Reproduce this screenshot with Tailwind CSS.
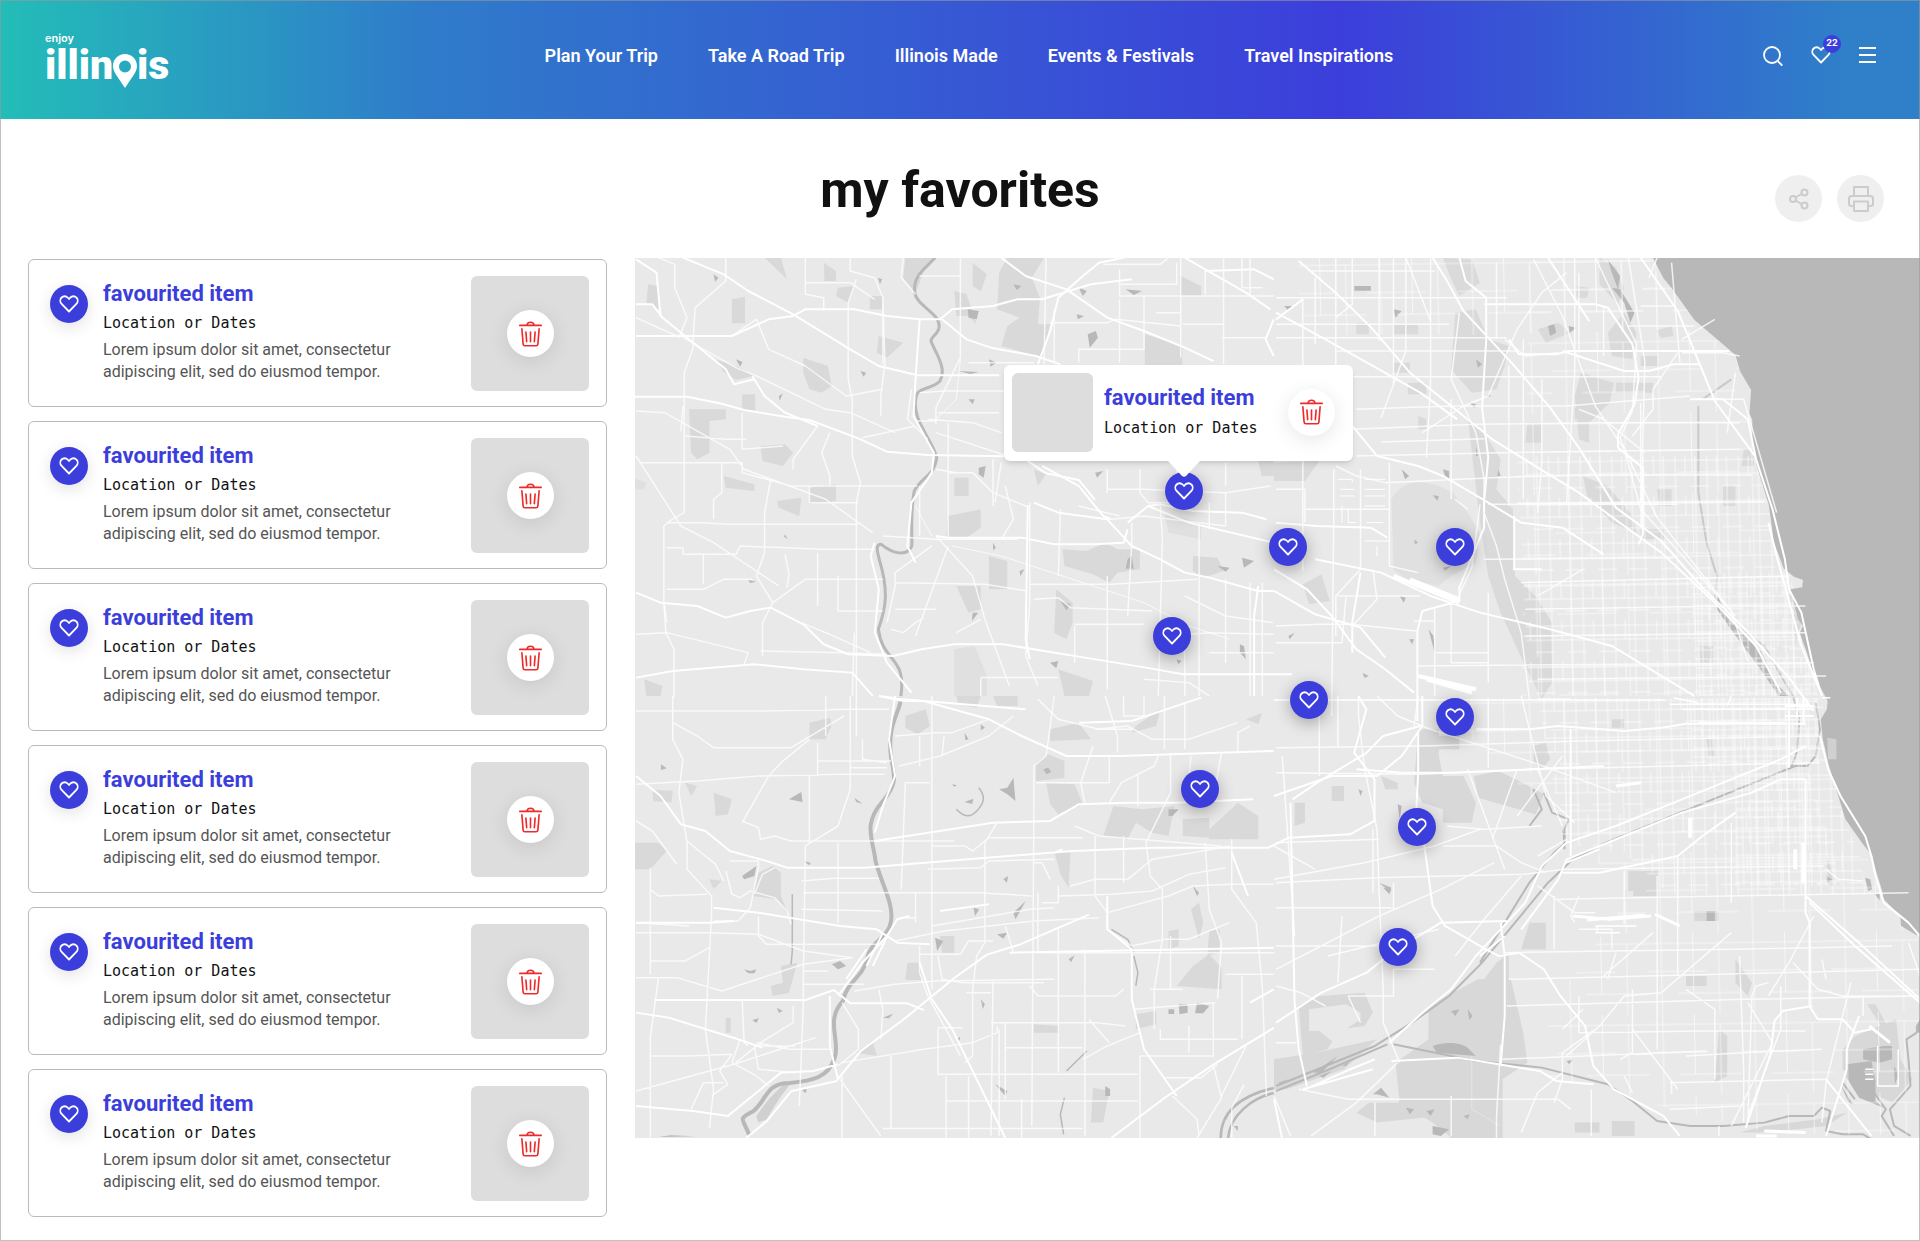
<!DOCTYPE html>
<html lang="en">
<head>
    <meta charset="UTF-8">
    <meta name="viewport" content="width=device-width, initial-scale=1.0">
    <title>My Favorites | Enjoy Illinois</title>
    <script src="https://cdn.jsdelivr.net/npm/@tailwindcss/browser@4"></script>
</head>
<body class="bg-white font-['Roboto','Liberation_Sans',sans-serif] text-[#111111]">

    <!-- Shared icons -->
    <svg class="hidden" xmlns="http://www.w3.org/2000/svg">
        <symbol id="icon-heart" viewBox="0 0 20 18">
            <path d="M10 16.5 2.6 8.9C.9 7.100.9 4.200 2.600 2.500c1.700-1.700 4.400-1.700 6 0L10 4l1.400-1.500c1.700-1.700 4.400-1.700 6 0 1.700 1.700 1.700 4.600 0 6.400z" fill="none" stroke="currentColor" stroke-width="1.800" stroke-linejoin="round"/>
        </symbol>
        <symbol id="icon-trash" viewBox="0 0 24 27">
            <g fill="none" stroke="currentColor" stroke-width="1.700" stroke-linecap="round" stroke-linejoin="round">
                <path d="M1 4.500h22" stroke-width="2"/>
                <path d="M8.500 4.200C8.500 2.200 9.700 1.200 12 1.200s3.500 1 3.500 3"/>
                <path d="M3 8l1.300 16c.1 1.200.8 1.800 1.900 1.800h11.600c1.100 0 1.800-.6 1.900-1.800L21 8"/>
                <path d="M7.200 11.500l.8 10M12 11.500v10M16.800 11.500l-.8 10"/>
            </g>
        </symbol>
    </svg>

    <div class="relative min-h-screen">
        <header class="bg-linear-[90deg,#23bdb8_0%,#2f7cca_22%,#3c3edb_70%,#2f7fc9_96%] text-white">
            <div class="flex h-[119px] items-start justify-between pr-11 pl-[45px]">
                <a href="#" aria-label="Enjoy Illinois" class="mt-7">
                    <svg class="h-[62px] w-[130px]" viewBox="0 0 130 62" fill="currentColor">
                        <text x="0" y="14" class="font-['Inter','Liberation_Sans',sans-serif] text-[11px] font-semibold">enjoy</text>
                        <text x="0" y="51" class="font-['Roboto','Liberation_Sans',sans-serif] text-[41px] font-black">illin</text>
                        <path fill-rule="evenodd" d="M80 26c-6.800 0-12 5.200-12 12 0 6 5 11 12 22 7-11 12-16 12-22 0-6.800-5.200-12-12-12zm0 6.500a6 6 0 1 1 0 12 6 6 0 0 1 0-12z"/>
                        <text x="92" y="51" class="font-['Roboto','Liberation_Sans',sans-serif] text-[41px] font-black">is</text>
                    </svg>
                </a>

                <nav class="mt-11 flex gap-[50px] text-lg leading-6 font-semibold whitespace-nowrap">
                    <a href="#">Plan Your Trip</a>
                    <a href="#">Take A Road Trip</a>
                    <a href="#">Illinois Made</a>
                    <a href="#">Events &amp; Festivals</a>
                    <a href="#">Travel Inspirations</a>
                </nav>

                <div class="mt-11 flex items-center gap-7">
                    <button type="button" aria-label="Search">
                        <svg class="h-[22px] w-5" viewBox="1 0 20 22" fill="none" stroke="currentColor" stroke-width="1.800" stroke-linecap="round"><circle cx="10" cy="11" r="8"/><path d="M16 17.300l3.700 3.700"/></svg>
                    </button>
                    <button type="button" aria-label="Favorites" class="relative">
                        <svg class="h-[18px] w-5"><use href="#icon-heart"/></svg>
                        <span class="absolute -top-[11px] left-3 size-[18px] rounded-full bg-[#3c3edb] text-center font-['Inter','Liberation_Sans',sans-serif] text-[9px] leading-4 font-bold">22</span>
                    </button>
                    <button type="button" aria-label="Menu">
                        <svg class="h-[18px] w-[17px]" viewBox="0 0 17 18" fill="none" stroke="currentColor" stroke-width="1.800"><path d="M0 2h17M0 9h17M0 16h17"/></svg>
                    </button>
                </div>
            </div>
        </header>

        <main>
            <div class="grid h-[139px] grid-cols-[1fr_auto_1fr] items-start">
                <h1 class="col-start-2 mt-[37px] text-[50px] leading-[68px] font-bold">my favorites</h1>
                <div class="mt-14 mr-9 flex gap-[15px] justify-self-end text-[#cccccc]">
                    <button type="button" aria-label="Share" class="flex size-[47px] items-center justify-center rounded-full bg-[#efefef]">
                        <svg class="size-[22px]" viewBox="0 0 22 22" fill="none" stroke="currentColor" stroke-width="2"><circle cx="5" cy="11" r="3"/><circle cx="16.500" cy="4.500" r="3"/><circle cx="16.500" cy="17.500" r="3"/><path d="M7.500 9.500l6-3.500M7.500 12.500l6 3.500"/></svg>
                    </button>
                    <button type="button" aria-label="Print" class="flex size-[47px] items-center justify-center rounded-full bg-[#efefef]">
                        <svg class="size-[26px]" viewBox="0 0 26 26" fill="none" stroke="currentColor" stroke-width="2" stroke-linejoin="round"><path d="M6 10V1h14v9"/><path d="M6 20H3.500C2 20 1 19 1 17.500v-5C1 11 2 10 3.500 10h19c1.500 0 2.500 1 2.500 2.500v5c0 1.500-1 2.500-2.500 2.500H20"/><path d="M6 15.500h14V25H6z"/></svg>
                    </button>
                </div>
            </div>

            <div class="grid grid-cols-[635px_1fr] items-start">
                <ul id="favorites" class="flex flex-col gap-[14px] px-7 pt-px pb-6"></ul>

                <section id="map" aria-label="Map of favorites" class="relative aspect-[1285/880]">
                    <svg class="absolute inset-0 size-full bg-[#e9e9e9] [&_path]:[vector-effect:non-scaling-stroke]" viewBox="0 0 1285 880" preserveAspectRatio="xMidYMid slice" fill="none" stroke-linejoin="round">
                        <defs>
                            <pattern id="blocks" width="32" height="41" patternUnits="userSpaceOnUse" patternTransform="rotate(-1) scale(2.4 3)">
                                <path d="M0 5h32M0 19h32M0 31h20M5 0v41M17 0v41M27 0v19" stroke="#ffffff" stroke-opacity=".7"/>
                            </pattern>
                            <pattern id="blocks-dense" width="23" height="27" patternUnits="userSpaceOnUse" patternTransform="rotate(-1) scale(2.400 3)">
                                <path d="M0 4h23M0 13h23M0 20h12M3 0v27M11 0v27M18 4v16" stroke="#ffffff" stroke-opacity=".7"/>
                            </pattern>
                            <pattern id="blocks-wide" width="93" height="81" patternUnits="userSpaceOnUse" patternTransform="rotate(-1) scale(2.400 3)">
                                <path d="M0 10h93M0 38h60M30 60h63M14 0v81M46 0v60M72 10v71" stroke="#ffffff" stroke-opacity=".6"/>
                            </pattern>
                        </defs>

                        <!-- North-west -->
                        <g transform="translate(-1 -2) scale(.408 .3333)">
                            <g fill="#d9d9d9">
                                <path d="M895 50l20-45h90l-30 60 20 60-5 80 30 0-20 100-100-35 15-60 30-25-55-25zM1252 235l92 35v60h-92zM665 5h75l-30 40-20 70-30-50zM415 305l60 25 10 60-25 20-30-10-15-50zM200 310l60 25 35 25-45 12-30-25zM135 460h90v30l-40 5v95l-30 20-15-20zM310 570l60-5 20 25-25 40-50-15zM430 695l65-10v50l-65 8zM220 660l75 25v20l-70-10zM870 900l45 15v85h-45zM1050 880l60 5 45-25 30 20h55v60l-55 10-20 30-40-25-70-25zM790 990h60v70l-30 10zM1035 1000l40 40v60l-15 50-30-20zM1040 1240l85 35-10 45h-60zM770 780l80-20v55l-40 35-45-10zM1370 900l60 5 15 40-50 20-25-20zM1520 560h48v100h-30zM240 130l32-8v80h-32zM35 85l25 5v70l-30-20zM265 415h32v50h-32zM465 20l30 25v30h-28zM320 5h40l15 65zM500 95l40-5-15 50-30-20zM578 120h30v40h-30zM830 20l35 35-15 50-20-15zM785 105l30 10 25 90-20-25h-30zM600 240l60 20-40 45-25-15zM785 665h35v55h-35zM980 640l30 15-20 35zM350 735l60-10-5 55-50-25zM1340 60l50 30v30h-50zM25 1270l45 20-5 30h-35z"/>
                                <path d="M785 1180l50-10 30 90 0 60h-80zM0 665l30 15-5 20H0zM1300 770l90 30v50l-80-20z" fill="#e0e0e0"/>
                            </g>
                            <g fill="#b8b8b8">
                                <path d="M818 160l27 5-5 25-20-5zM1112 235l20-10 5 20-20 30zM1090 95l20 10-10 15zM845 635l17-5-5 35-12-10zM930 85l20 5-12 12zM1205 100l40 5-20 12zM195 55l12 10-8 12zM598 65l10 5-5 15zM250 310l16 8-6 14zM870 310l18 10-14 12zM820 430h15l-5 15zM1130 650l20-5-15 20zM1210 910l10-12 5 40-20 0zM1045 1035l25 10-10 18zM1020 1220l20-5-5 22zM1330 1210l12 5-8 10zM1085 175l18 5-15 10zM1430 930l30 5-10 12zM1490 905l30 10-25 20zM555 345l14 5-6 12zM355 420l10-8-8 22zM370 835l7 15-9-8zM880 860l7 15-7 8zM945 945l12-5-10 20zM830 1070l14 0-16 25zM280 972l20 5-15 4zM1485 1165l10 5 5 40-15-20zM795 345l50 3-20 6z"/>
                            </g>
                            <path d="M738 5c-20 30-55 50-50 105 5 40 60 60 60 100 0 25-20 30-20 45 10 35 40 80 22 120-20 25-55 20-58 45-15 70 40 130 50 185-5 55-40 60-55 100-10 60-5 120-6 165-15 40-55 15-75-5-15 0-10 20-5 45 25 100 15 150-2 210 10 100 70 80 55 200" stroke="#b8b8b8" stroke-width="3"/>
                            <g stroke="#ffffff" stroke-opacity=".75" stroke-width="1.500">
                                <path d="M225 5v70l-75 80-5 90 0 30-22 75V770l-30 20-20 20v230l5 90 20 50v145M60 5l40 20v70l30 90-20 60M120 245l130 90 50 25 170 100 60 10 110 60M5 185l100 55M240 240h0l60-50 30 90 90 50 100 90 90-20M420 5v75h110l60 50M420 80v35l45 10v40M530 5v40l60 20 20 60v200M660 5l-5 60 35 50M800 5v300l-60 150 0 50M700 60h100M545 70l-20 70v230l10 60v170l20 80-10 60v700M610 120l5 200-10 100v60"/>
                                <path d="M5 465l70 5 160 110 35 60 200 90 115 100M125 540l100 10h50M15 620h250v30l120 40h310M120 450l-5 75M265 470v110l100-10M450 510l-60 100 0 30M480 530l-20 60 20 70v30M215 620v90l-20 20v60M335 670l-15 100v120l-20 70 40 80-25 60v100M430 690v50h120M700 690v150M5 600l110 210 80 50 160 130M80 800h90l60 5h320M80 875h40v20h130l10-25 200 10h130M170 895v90M80 1000h90l50-30h70M370 895l10 60-5 40M340 1040l80-70h190M450 890v160M500 960v105h110M610 840l130 10h200M640 990l0-40 90-80M640 990l-20 110M640 980l220 5 105 20"/>
                                <path d="M5 1135l75-5 200 60-10 35M80 1100l-5-55M310 1185l200 5 110 5M410 1100l60 30 110 60M540 1130l-5 190M740 1060h-100M630 1120l30 10 30-30 20-15M690 1140l80-270M740 840l90 120 30 130 60 200M770 500v340M790 520v1M740 530l200 80M745 470h150M770 650l60 0 50 60 80 40 10 0M680 400l-10 90 50 60M720 490l110 10 70 30M690 495h50M560 545l130-35M740 640l50 10M700 410l60-5h160M820 320h160M880 610v140M900 620l-15 120M850 1090l-60 40M850 1265h190M850 1265v55M910 690l20 100-30 60"/>
                                <path d="M1010 5l-5 320M1030 160v160M1150 25h140l20-20M1190 40v80h378M1190 85h140V20M1190 130v190M1090 280h160v-160M1090 280v40M1340 5v300M1445 5v320M1490 5v90h50M1020 200h140l20-10 160 20v-40h-60M1345 205h100M1400 45v70M1510 5v110M1440 245h110M970 740v300l-10 160 30 90M1045 760l-5 200M970 985h200l210-15M1160 700h90l200 10 110-20M1160 640v70M1240 640v70l20 30h90M1170 790l80-10 200 30v-100M1220 800v60l-10 220M1330 620v60M1450 620v70M1090 750l100 30M1410 740v80M1290 750l5 100-10 470M1385 800v520M980 1030l60-5 30 30 200 10M1080 1110v110M1160 960l0 340M1080 1105l170 0M1450 970l0 250M1290 1060v60l60 20v180M1350 1020l100 60 118 20M1510 980v340M1540 980v340M1300 1140l110-10 158 5M1250 1270l110 10 50 40M1410 1190h158"/>
                                <path d="M780 870l120 30 150 60 200 80 110 70 100 40M690 750l40 90M800 310l-10 120-50 60" stroke-width="1"/>
                            </g>
                            <g stroke="#ffffff" stroke-width="2">
                                <path d="M120 5l100 50 60 50 110 70 80 60 60 45 70 50 95 28h200M5 10l50 40 10 130 90 90 70 70 20 45 50-15M5 145l40 0 25 40M5 240h235l90-50 60-10 30-20h120l80 20 80 10h50l30-30 100-10 60-20h60l120-45 100-15M0 422h130l80 20 60 20 100 20 60 10 120 55 70 40 100 10 230 5 60 50 80 20 40 60M290 360l30 60 50 50 80 40M700 190l-10 180-5 110 50 110-5 60-50 90-10 130 20 50M755 190l60 60 60 25 110 25 60 25M900 5l60 55 100 40 100 85 90 40 100 50 70 40M1200 5l-60 15-40 40-60 65-20 100-30 100M1350 5l50 35 100 70 60 50M1400 45l120-5 48 30M1568 190l-20 60 20 50"/>
                                <path d="M740 840l30 5h180l80 20h100l70-5 10-40M980 740l60 30 120 20 60 80 70 40 60 40 60 15 120 40 38 0M1170 790l-20-10-60-90-90-60M1210 800l50-50 30-5 80 20 120 5 60 20M1260 750l100 50 208 60M5 1010l60 30 90 10 70 35 60-20 50-10 80 50 50 60 60 30 110 5 70-20 80-15h120l200 40 150 30 90 20h268M5 1265l90-20 200-20 120 15 120 10 50 70M590 860l-10 40 20 100-10 130 30 90 60 90M965 750l-5 400 10 60M1530 990l-10 90v240"/>
                            </g>
                        </g>

                        <!-- North-east -->
                        <g transform="translate(639 -2) scale(.412 .3333)">
                            <g fill="#dadada">
                                <path d="M410 5l70 5 20 70-50 40-20-50zM440 170l50-10 30 90 50 20-10 60-20 70-60 10-50-70zM790 5l40 30 20 60-15 50-45-60zM810 230l40-60 30 60-10 80-50-10zM470 480l50 70 30 60-10 90 40 60 5 200 50 60 40 80 0 180-25 50-40-100-60-160-30-110-20-160zM745 350l80 30-10 60-50 60 0 60-25-10-10-130zM750 660l60 30 60 90 10 50-60-30-60-80zM830 380h90v30h-90zM0 620l110-5-35 60H0zM70 985l45-30 20 80-50 10zM1250 1000l20 20 15 60-20 90zM615 500h35v60h-40zM640 220l50-20 30 30-60 30zM1140 580h25v50h-30zM440 240l50 10v80h-50zM735 90l30 5-5 30h-25z"/>
                                <path d="M285 730c30-70 90-60 150-20l35 60 30 60-10 90-60 40-30 30-80-20-30-30z" fill="#e0e0e0"/>
                                <path d="M290 205h60v30h-60zM325 380h45v35h-45zM290 320h40v30h-40zM890 300h40v30h-40zM925 225l40-15 5 30-30 5zM730 455h35v35h-35zM930 700h35v50h-30zM1090 690h30v60h-30zM1030 1170h35v50h-30zM630 1150h35v30h-30zM890 820h60v30h-60zM200 200h30v35h-30zM350 480v40h20v-30z"/>
                            </g>
                            <g fill="#b8b8b8">
                                <path d="M195 90h40v14h-40zM820 95l20 5 35 70-10 30-15-60zM810 10l30 50-5 40-15-50zM665 210l15-5 5 25-15 10zM715 210l18 5-15 15zM25 150l20 0-10 15zM475 440l16 5-5 10zM385 718l15 2-3 14zM410 640l15 5v25l-10-10zM310 640l18 20-10 10zM545 640l5 20-8 0zM490 570l5 30h-5zM375 1120l12 20 5 60zM305 1020l15 5-5 15zM328 1150h12l-5 15zM35 1140l15-10-12 20zM290 160l20 5-15 20zM320 145l12-2zM490 310l15 15-10 10zM340 850l10 10-8 5zM520 415l8 5-12 3zM215 1250l15 10-10 6zM410 935l20-5-15 14zM1075 1010l20 60 90 120 30 90 35 40h-25l-50-90-60-100-40-70z"/>
                            </g>
                            <path d="M1030 450v260l20 150 25 100-5 70 40 70 80 70 50 110 20 40M1040 430l70-60" stroke="#c9c9c9" stroke-width="2"/>
                            <path d="M620 0h300l100 190 100 107 40 270 50 220 50 270 70 263H600z" fill="url(#blocks-wide)"/>
                            <path d="M60 6h850l60 140 60 90H60z" fill="url(#blocks-wide)"/>
                            <path d="M590 600h580l30 130 50 300 50 160 20 130H620z" fill="url(#blocks)"/>
                            <path d="M1010 950h240l50 240 20 130H1030z" fill="url(#blocks-dense)"/>
                            <path d="M920 6l25 60 20 30 55 95 100 106 12 50 26 55-4 70 7 20 0 60 10 75 30 120 12 110 24 80 25 25 22 10-2 22-28 6 18 90 12 20-8 20 20 70 15 60 35 80 45 5v12l24 8v8h-45v12H1568V6z" fill="#b8b8b8"/>
                            <g stroke="#ffffff" stroke-opacity=".8" stroke-width="1.500">
                                <path d="M5 125h560M90 45h300M70 125v820M100 65v200M150 5v500M190 5v140l-40 40M255 5v250M290 5v380M320 5v280l-60 200M380 5v380l-10 220M5 245h560M150 285h440M5 205h420M190 362h550l200 0M200 460l230-10h280l300-30M190 520l300-15 300-5h340M260 558l250-10M200 600l350-10 580-10M270 680l260-15 200-8h430M5 700h70v100M70 760h210M590 742l600-5M520 745h460M145 640v140l-5 600M210 640v300l-60 80 0 120M5 1160h160l10-140M155 1020h200M5 1110l100-5 80 0 160 20M240 940l10 90-60 80M150 630l50 30 70 20M280 620v310l70 20M430 430v300M510 910l460-5M500 745l-20 190-30 80M600 980l650-20M610 1060l500-10 180 0M610 1140l680-10M350 1230l960-10M640 1270l700-10M340 1095h50M390 1060l0 260M430 1040v180l90 0M520 1010v270M390 1190h130M730 5v340l-20 400M650 370v250l-10 150M605 250v480M570 330v420M540 20v230M740 50l0 240M800 150v150M860 5l40 310-10 500M890 150h80M860 210h160M930 5l-20 60"/>
                                <path d="M450 170l-20 200 60 160 20 140 0 100 30 100 20 100 40 160 20 200M710 50l-60 60-60 110-70 200-60 30-100 80M560 250l50 50 80-10M630 10l70 170 50 170 30 100 70 130 40 180 30 40 200 280M780 5l100 260-10 200-30 80 20 60 70 180 180 280 40 150M740 460l60 30 100 100M890 440l0 300M965 20l20 300M990 250l80-60M990 290h100l40 10M1030 430h110l80 340M1120 350l-20 180M980 290l-60 110 0 60-50 80M320 5l60 190M470 760l-30-30M640 1020l110-80"/>
                            </g>
                            <g stroke="#ffffff" stroke-width="2">
                                <path d="M60 15l90 95 90 110 90 130 110 110 90 90 130 100 80 60 110 100 90 80 130 150 100 130 60 140M5 170l120 80 130 90 100 70 90 80M5 190l65-60M385 5l35 70 40 90 60 80 60 80 90 130 70 120 90 180 110 100 100 140 100 120 110 150 60 100M450 5l15 70 50 50v130l-10 200 15 150-10 130 0 80-60 180 0 40-90 30-12 60v270M510 145h270l30 10 60 110 15 100-10 80-40 90 0 40 60 60 0 200-10 30M665 5l100 190M570 250l25 45 90 0 30-10h390M700 285l150 60 60 0 60-20h60M190 510l60 90 100 30 60 30 110 80 80 60 100 15 100 80M5 800l100 10 130 5 40 30M0 940l80 60 60 80 60 100 70 60 70 70M0 1005l100 70 110 40 60 90M100 910l160 40 120 70 120 50 170 50 150 50 200 150M890 5l90 160 90 270 100 170M1010 430h80l60 60 20 120 40 150 30 150 10 90 30 70 30 170 20 80M1200 800l20 100 60 270 50 150M190 1190l0-90 20-150M580 940h70M583 780v160"/>
                                <path d="M290 960l160 80M330 970l120 60M350 1260l140 40M370 1270l110 40" stroke-width="4"/>
                                <path d="M155 670h35v10M160 700h35M160 720h35M220 670h50M220 700h50M220 720h50M220 750h50M165 750v50M180 760v40h20M225 800h40M220 855h60M250 870v30" stroke-width="1"/>
                            </g>
                        </g>

                        <!-- South-west -->
                        <g transform="translate(-1 438) scale(.408 .3333)">
                            <g fill="#d9d9d9">
                                <path d="M0 440l60 0 20 25-40 55H0zM305 530l35-20 20 20v70l20 60-30-50-60-10zM430 80l50-15 5 20-15 45-40 0zM665 60l50-20 10 50-30 25-30-20zM985 200l30-25 40 20v50l-70 10zM1010 260l70 5 20 60-60 30-20-30zM1175 330l70 10 80-10-15 90-40-10-40-30-20 50-60-10zM1410 400l70-80 50 40v70h-120zM1345 370l65-5v60l-65-5zM1330 870l40-60 40-35 30 40v65zM1410 705l25-5v70l-30 10zM1030 465l40 0-5 110-20-40zM670 800l30 0 5 52h-40zM335 870l30-10-5-50 40-10-20 90-40 10zM45 282l50 2-3 35-45-3zM195 290l45 20-10 45-30 5zM125 260l30 10-15 30zM1230 955l50-10v40l-50 15zM1125 1175l40 10-15 95h-30zM750 720h35v50h-30zM790 0h60l-10 35-45-10zM880 0h60v30h-50zM1020 100l70-20 30 50-100 5zM545 1070l40-35 10 45zM1365 640l20-20 10 60-10 50zM225 965h12v45h-12zM1310 705l25-5v50l-25 10zM980 985l60 5v20h-60zM1230 90l60-50-10 50-60 20zM185 550l30 5-20 25zM1500 70l40-20-10 35z"/>
                            </g>
                            <g fill="#b8b8b8">
                                <path d="M380 310l30-22 3 30zM265 540l35-30-5 30-25 10zM895 280l20-5 15-30 5 70-20-20zM810 318l22-10-3 16zM485 805l20-10 15 15-20 10zM270 820l15 5 15-5-5 12-15 0zM738 725l20 10-15 30zM890 715l25-5-10 18zM832 635l14 5-10 20zM66 205l14 12-14 5zM1335 925l22 0 0 25-20 5zM1310 940h14v14h-14zM1380 920l30 10-15 22-20 0zM1155 1170l12 10v20h-12zM885 1165l30 20-5 15zM610 965l25-12-10 14zM1003 220l12-5 8 12-12 8zM60 1323l30-5 60 3zM410 1180h14l-4 12zM850 910l10 15-5 14zM540 305l20 18-15-5zM850 85l10 10-10 8zM810 110l10 20-8 2zM780 265l12 3-8 4zM1470 1290h10v15zM290 972l16-5-6 14zM350 935l15 10-10 5zM1310 340l25 0-15 20-10 0zM905 550l12-10-3 20zM930 650l30-35-25 55zM1065 790l15-12-8 20zM1370 570l15 20-5 10zM790 1030l10-8-4 16zM415 495l18 5-3 8z"/>
                                <path d="M300 1260l30-50 40-50h15l-30 50-30 60-20 10z" fill="#d0d0d0"/>
                            </g>
                            <path d="M655 5c-5 50-35 80-25 180 10 60 15 80-20 130-50 70-25 110-18 180 15 70 45 130 38 180-5 50-50 60-58 110-10 60-50 70-60 130-45 60-5 120-20 170-15 60-55 70-110 76-60 0-55 50-90 85-40 25-25 20-10 70" stroke="#b8b8b8" stroke-width="4"/>
                            <path d="M845 275c20 30 10 50-5 70-15 20-30 20-50-5M1055 1205l-10 50 8 60M1060 1125l50-60M1170 700l40 30 15 40M1225 780l10 50-5 40M388 595v170l-3 40" stroke="#b8b8b8" stroke-width="1.500"/>
                            <path d="M1438 1326c0-90 60-130 130-150M1456 1326c5-70 60-120 112-135" stroke="#b8b8b8" stroke-width="2.500"/>
                            <g stroke="#ffffff" stroke-opacity=".75" stroke-width="1.500">
                                <path d="M5 45h300l230-5 90 0M95 0v130l25 60-10 100 20 150 0 80 60 80v60l-15 340 20 180-10 116M95 80l60 40 40 35h190l130-95M470 0v120M530 0v280l-30 110-80 60-5 400v80l-10 300M5 265l150-10 150-15 200-5h110M430 130l-70 70-30 40-65 140M430 240l0 200M265 375l40 20 5 35 35-10 40 15h400M450 140v100M450 195h180M530 215h90M560 130v60l60 10M5 375l40 30 60 100M130 435l70 70 20 50M40 515v320M5 710h180l120 5 110 50 120 20M305 660v60l20 25h290M5 680l130 10M40 795h85l60-40M5 845h100l110 40 200-80 120-20M60 845l-20 180v300M225 525l15 70 20 10 25-20 60 20 30 40 10 40M235 495h70v20l-20 120-30 40-60 0M345 515l-30 20-20 60M40 580l20 20 120-5M410 555l80-8h110M415 590h230l200 0 130 10M410 640l200 5M500 440v240M415 825h60M415 865h150M265 910l5 130 10 10M390 930v50l-80 60-60 60M395 1050h-100l10 70 90 10M40 1080h90l110-5-30 50 20 40-40 35M240 1100l60 40 30 30M5 1185l240-80 200-80M140 1240l30-80 50 0M260 1030l-20 70M300 1040l80 20h100"/>
                                <path d="M700 120v90M760 120l-5 60M730 0v250l0 230v400M640 120l100-10 40 0 90-40M650 210l100-30 120-60 60-60M665 260h60M665 260l-10 320M730 450h80l20 15 40-40 230 0M720 520l130-5 20-20 160-5M690 590v90M650 665h40M730 690l240-50 60-5M640 735l120-30 220-30 160-10M700 750v80l20 70 80 180M700 775h100l20-40 60 0M540 885l100-20 100-10 290-5M745 780l10 70 50 10 200 0M890 380l-30 60v300l-20 40-10 100v200l-20 20M1030 0l-20 180-30 30v50l0 80-5 950M910 690l20 80M990 590v180h580M1000 620h40v-50M980 500h20l20 50M880 850l-5 470M815 890h60M875 980h230l30 0 70 10M890 990v20l-60 30-120 20-200 40M910 980v230M745 995v140h490M745 995h60M765 1140v186M765 1215h470M820 1140v186M910 1055h190M1040 700v430M1105 760v560M610 1298h490M630 1080v220M600 880l10 60-5 90M510 920l40 80v60l-50 50M505 1150l100 170M510 1140v186M895 1000v320M950 1210v116M970 870l20 30h140l50 0 20-20M1115 970l50 70"/>
                                <path d="M1155 0l30 120v50M1200 0v60h50V0M1130 100l80-10 60 40h90l120-50M1300 0v160M1350 20v140M990 10l50 60 100 30 80 0M1125 150l-30 110 10 60M1165 180v80h-180M1285 180l-10 30-80 50-30 60M1235 230v100M1315 170v120l-60 150 10 100 30 40v150l-20 150v120M1365 180l-10 130M1440 170l-20 140M1070 570l60-20 80 0 60-60 100-20 90-20M1040 600l130-5 100-10 90-50 90-20M1160 650l150-50 60-30 90-5 108 0M1130 420v180l30 50v50l60 50M1200 420v140M1080 390l60 30 300 30M1400 440l10 200 30 100-10 170M1465 430l0 150 60 100 15 190 10 330M1480 170v-60l30-20M1220 750l80-20h60l100-50M1450 835h118M1315 720v160M1265 880h80M1225 940l200-20M1290 1000l0 30h190M1240 1080h180v-160M1240 1010l-80 40-60 40M1300 1145h90l40-40M1320 1200l60 70 5 50M1240 1080v246M1360 990v80M1490 840v190M1440 1200l60-150M1380 1326l60-120-20-100M1465 1326v-90l30-70"/>
                            </g>
                            <g stroke="#ffffff" stroke-width="2">
                                <path d="M5 240l60 60 50 85 60 20 60 60 90 30 50 20h190l200-20 310-30 200-10h200l80 0 50-30 150-10 60-40V250l-50-80 30-130-20-40M600 0l60 15h50l160 55 80 50 110 60h130l378-15M590 435l290-55 140-5 70-50 120-5h120l188-10M600 0l60 10 300 30M5 680h180l60-5M195 635l110 15 200 40 90 10 50 40 80 5M50 912h370l70-30 40 40h140l40 20M5 950l80 15 170 65 60 25M5 1230l140 15 85 15 130-130 80-5 60-20M275 1326l50-50 60-90 110-30 60-90 100-90 130-130 80-70 80-30 170-90M700 800l30 110 50 90 130 326M500 900l60-100 60-80 25-50 30-10M480 900l0 150 20 100M520 850l50-90M640 0l-15 130 15 110-30 90-20 80M1170 1326l130-120 120-100 148-110M1160 600v100l60 60 0 150 10 50 20 100 80 140M1050 460l-20 10M920 770l648-15M1090 80l130-5 170-70M1465 470l40 130M1510 920l58-40"/>
                                <path d="M750 645l120-20M610 710l-40 100M625 710l-40 100"/>
                            </g>
                        </g>

                        <!-- South-east -->
                        <g transform="translate(639 438) scale(.412 .3333)">
                            <g fill="#d8d8d8">
                                <path d="M350 100l50 0v80l10 60 50 0 30 80-10 60h-70v-40l-50-20-20-60zM485 240l60-15 50 30 60 40-20 60-140-50zM630 150l30-10 10 50-20 30-20-20zM375 930l120-80 80 0 30 160 10 90-60 50v180h-120l-50-50-80-60-10-120 80-70zM60 930l50-30 110-10 20 60-20 40-60 10-30 60-60 20zM0 1090l100-20 150-40-80 90-140 60-30 0zM50 320h25v60l-25 10zM860 525h72v75h-60v-15h-12zM620 680l40 0v80h-60zM1020 645h60v30h-60zM1120 790l40 70-10 40-30-40zM1080 1000l20 20v120l-30 20zM1000 840h50v30h-50zM200 1250l30-30h70l50-50 60 10 20 30-30 50-150 20zM570 770l-30 30-30 50h60zM1410 1020l100-50 10 120 30 60-50 70-50-30-70-70 0-60zM1340 480l20 60 0 30-20-10zM1390 1250l-70 20-130 20-60 20h60l150-20zM400 120h50v40h-50zM820 70h30v25h-30zM1050 130l20 0v50l-15 0zM730 1280h60v30h-60zM820 1275h55v45h-55zM1440 925l20 0 40 90-10 10zM140 270h30v45h-30zM260 240l40 20v20h-30z"/>
                            </g>
                            <path d="M85 940l90-15 35 25 0 20-35 30-10 30-25 5-30-30-25 0z" fill="#e9e9e9"/>
                            <path d="M480 1070v170l70 50" stroke="#e4e4e4" stroke-width="1"/>
                            <g fill="#b8b8b8">
                                <path d="M385 1050c30-15 70-10 85 5l20 25-95-10zM1430 1060l50-10 20 0v40l-30 10-40-10zM1390 1105l60-10 10 60v60l20 20-60-30-30-60zM1505 1110l12 25-10 30zM430 945l20-5-10 20zM470 940l12 20-8 12zM320 1235l20 5-10 15zM370 1245l20-5-10 20zM385 1290l40 10-20 20-20-5zM460 1260l15-5-5 15zM255 560l30 15-5 10zM265 575l20 5-5 15zM1050 645h20v30h-20zM240 1195l20-20 20 30-30-10zM1340 540l15 10-12 12zM1435 545l12 5 5 30-10 5zM1455 590l15 5v18zM300 325l10 5-5 40zM205 280l10 5-5 15zM130 270l-15 30zM95 1130l60-50-40 50zM10 1160l25-10-20 15zM110 1140l30-15-20 20zM165 1110l20-15-10 15zM700 400l8 20-5 40zM1375 1165l30 60-10-5zM1220 1320l20-3zM710 1095l16-4-10 14zM400 1000l15-8z"/>
                            </g>
                            <path d="M5 1170l120-60 120-60 90-70 90-80 80-100 80-120 80-120 60-70 80-50 140-70 240-120 80-40 30 0 20-30 10-80-10-80M5 1185l120-60 150-80" stroke="#b8b8b8" stroke-width="2"/>
                            <path d="M500 800l60-120 60-120 60-90 30-30M290 1045l200 50 160 20 160 50 60 50 60 60 80 15h80l100-10 60-20h60l20-25 20 10-10 60 40 10 50 0 40 30M705 460l0-60 10-30-40-20-20-60M630 280l20 60-30 50M1545 1320l-40-30-10-50 50-70-5-80-5-60 25-20M1445 1170l40 70-10 20 30 60M1260 5l15 60-5 100-15 50M1410 1210l-30-50" stroke="#b8b8b8" stroke-width="2"/>
                            <path d="M380 6h950l40 300 60 140 40 150 95 120v600l-350 0-550-170 0-200 200-350z" fill="url(#blocks-wide)"/>
                            <path d="M640 6h690l20 200 30 150 40 110 20 130H960L850 470 700 440z" fill="url(#blocks)"/>
                            <path d="M1010 6h310v220l-300 0zM1120 230h180l80 340h-260z" fill="url(#blocks-dense)"/>
                            <path d="M1345 0l-3 40-15 30 5 60 15 80 25 100 15 60 40 70 25 40 8 40 15 60 5 30 40 50 2 30 38 28 8-6V0zM1568 970l-10 20 0 20h10z" fill="#b8b8b8"/>
                            <path d="M1343 125l22 5v60h-20z" fill="#d0d0d0"/>
                            <g stroke="#ffffff" stroke-opacity=".8" stroke-width="1.500">
                                <path d="M5 155l360-5 380-15 580-15M5 230l350 5 290-15 680-20M110 0v240M155 0v150M205 0v60l15 160 30 180 5 180 10 300 0 100 40 120M350 0l-10 90M5 440l250-10M5 560l240-15 360-10 100-15 630-10M5 635h280M290 560v80M5 750h250M250 0l50 60 60 30 20 10 250 100 200 90M240 400l0 190M520 5v210M640 220l60 170M590 360l110-180M410 450l130 0 60 50 60 30M600 0l60 300M470 220l60 200 30 100M590 220l-60 210M660 300l70 80M420 390l90 10 140-10M500 400l-110 50-170 50-220 50M5 820l250-160 150-80 130-80M20 180l30 540M0 450l100 70M155 860l10-200M850 525v160M980 480v360M930 540v520M1110 380v240M400 700l-70 20-200 60M5 870l60 20 60 40M5 1040h50M60 1180l120 30h510l30 30M180 900h110v-80l100 0M180 900l30 80"/>
                                <path d="M565 930l580-20 423-10M570 850l1000-30M560 770l560-10 380-10M690 610l850-20M740 1010l300-5 250 0M740 900v110M870 880v190l-30 20M550 1090l100-5 400-20M780 1000l-80 70 0 80-20 70M1110 710l-170 180-90 10-60 90-80 90M800 840l120-130M1000 880l70 60v210M1200 860l-30 10-10 30-10 380M1130 780l10 340 0 160M1200 900l50-100 60-140M1260 800l60 80 60 20h190M1400 860l-60 300-10 120M1150 1260l80-260 0-130M1110 1290l100-250-60-120M640 480l70-50M680 600l0 160M740 600l-20 60 10 20M700 1000l50-60M850 1140l20 50M870 1000l110 180M1000 1080l140-10 190-10M960 1160l380-10M965 1155v40M960 1240l170-10M0 1200l40 120M90 1320l110-100 100-120M540 1326l0-60 10-220M600 1310l40-120 60-60M430 1200v120M245 1220v100M770 1180v140M1080 1290v30M1340 850l-10-60M1430 900v60M1540 740l28 100M830 770l-20 80M600 540l-90 130-70 110M640 570l90 80 50 0M740 700h80v60M1340 520l30 30 60 5"/>
                            </g>
                            <g stroke="#ffffff" stroke-width="2">
                                <path d="M45 310l60-50 120-90 40-50 90-30M0 300l140-60 110 0 60-60 50-90 0-90M350 110l0 120-5 120 20 100 20 180 30 60 100 70 30 20 50-10 60 50 40 80 60 90 20 120 50 70 120 80 40 60M5 980l110-90 110-60 60-60 80-60 40-30 160-5M490 100h130l70-10 160 15 90-10 60-12h290M560 780l-10-100M560 780v180l-10 150M600 700l90-150 20-60 80-40 200-100 170-60 70-40h60l0 100 0 300 10 30v250l20 40 60 0 30 40 40-10M500 780l60-60M280 1040l90-100 60-60 60-100 120-160 40-110 60-70 120-50 160-80 240-120 60-40M200 220l110 10 120 0 370-20M20 1330l-20-120M75 1180l110-60 60-30M285 1095l160-10 100 20 100 20 40 30 90 10M80 1170l-20-110-10-140-10-600M1325 120l20 100 30 80 60 120 15 60 10 60 20 80 60 60 48 70M1290 600l130 140 148 170M1300 620l110 130 158 170M1305 930l-70 15-20 30-10 100-60 220M1420 960l-30 100 0 60-50 200M1340 1150l110 170M1250 5v210M1270 5v60M1285 5v80M1240 30h70M1240 60h70M1030 80h210M720 100v380M700 530h90l190-50 60-60 80-70M790 460l-80 40M240 1120l-170 60"/>
                                <path d="M1010 365v60M1265 460v60M1285 560v-120" stroke-width="4"/>
                                <path d="M725 660l90 10 100-10M760 672l140-15M925 655l60 35M830 270l60-10M1190 1305l100 5M1170 1320h50M1445 990l50 50" stroke-width="3"/>
                                <path d="M780 690h100M780 710h60M785 690v20M0 12h950M960 25h340M990 40h320M970 5l60 15M1100 30l10-30M640 10l80 0M1350 5h-20M1435 1120h20M1435 1135h20M1435 1150h20M1465 1050v120h50v-110" stroke-width="1.500"/>
                            </g>
                        </g>
                    </svg>
                </section>
            </div>
        </main>

        <!-- Page frame -->
        <div class="pointer-events-none absolute inset-0 border border-[#999999]/60"></div>
    </div>

    <!-- Selected pin popup -->
    <template id="popup">
        <div class="absolute bottom-[30px] -left-[180px] flex h-24 w-[349px] items-center rounded-md bg-white pr-[18px] pb-0.5 pl-2 shadow-md">
            <div class="h-[79px] w-[81px] rounded-md bg-[#dddddd]"></div>
            <div class="ml-[11px] flex-1">
                <h3 class="text-[22px] leading-7 font-bold text-[#3c3edb]">favourited item</h3>
                <p class="mt-1 font-['DejaVu_Sans_Mono',monospace] text-[15px] leading-6">Location or Dates</p>
            </div>
            <button type="button" aria-label="Remove favourite" class="flex size-[47px] items-center justify-center rounded-full bg-white text-[#ee2a2a] shadow-[0_4px_20px_rgba(0,0,0,0.1)]">
                <svg class="h-[26px] w-[23px]"><use href="#icon-trash"/></svg>
            </button>
            <svg class="absolute top-full left-[164px] h-4 w-8" viewBox="0 0 32 16" fill="#ffffff"><path d="M0 0h32L18 15q-2 1.500-4 0z"/></svg>
        </div>
    </template>

    <script>
        const MAP_WIDTH = 1285;
        const MAP_HEIGHT = 880;

        const favorites = Array.from({ length: 6 }, () => ({
            title: "favourited item",
            meta: "Location or Dates",
            text: "Lorem ipsum dolor sit amet, consectetur adipiscing elit, sed do eiusmod tempor."
        }));

        const pins = [
            [653, 289], [820, 289], [537, 378], [674, 442], [820, 459],
            [565, 531], [782, 569], [763, 689], [549, 233]
        ];

        // Sidebar cards
        document.getElementById("favorites").innerHTML = favorites.map(item => `
            <li class="flex h-[148px] items-start rounded-md border border-[#bbbbbb] pr-[17px] pl-[21px]">
                <span class="mt-[25px] flex size-[38px] shrink-0 items-center justify-center rounded-full bg-[#3c3edb] text-white shadow-[0_4px_16px_rgba(0,0,0,0.12)]">
                    <svg class="h-[18px] w-5"><use href="#icon-heart"/></svg>
                </span>
                <div class="mt-5 ml-[15px] flex-1">
                    <h2 class="text-[22px] leading-7 font-bold text-[#3c3edb]">${item.title}</h2>
                    <p class="mt-[3px] font-['DejaVu_Sans_Mono',monospace] text-[15px] leading-6">${item.meta}</p>
                    <p class="mt-1 max-w-[300px] text-base leading-[22px] text-[#555555]">${item.text}</p>
                </div>
                <div class="mt-4 flex h-[115px] w-[118px] shrink-0 items-center justify-center rounded-md bg-[#dddddd]">
                    <button type="button" aria-label="Remove favourite" class="flex size-[47px] items-center justify-center rounded-full bg-white text-[#ee2a2a] shadow-[0_4px_20px_rgba(0,0,0,0.1)]">
                        <svg class="h-[26px] w-[23px]"><use href="#icon-trash"/></svg>
                    </button>
                </div>
            </li>`).join("");

        // Map pins, placed as a share of the map's size
        const map = document.getElementById("map");
        pins.forEach(([x, y]) => {
            map.insertAdjacentHTML("beforeend", `
                <div class="absolute size-0" style="left:${x / MAP_WIDTH * 100}%;top:${y / MAP_HEIGHT * 100}%">
                    <button type="button" aria-label="Show favourite" class="absolute -top-[19px] -left-[19px] flex size-[38px] items-center justify-center rounded-full bg-[#3c3edb] text-white shadow-[0_4px_16px_rgba(0,0,0,0.3)]">
                        <svg class="h-[18px] w-5"><use href="#icon-heart"/></svg>
                    </button>
                </div>`);
        });
        map.lastElementChild.append(document.getElementById("popup").content.cloneNode(true));
    </script>

</body>
</html>
